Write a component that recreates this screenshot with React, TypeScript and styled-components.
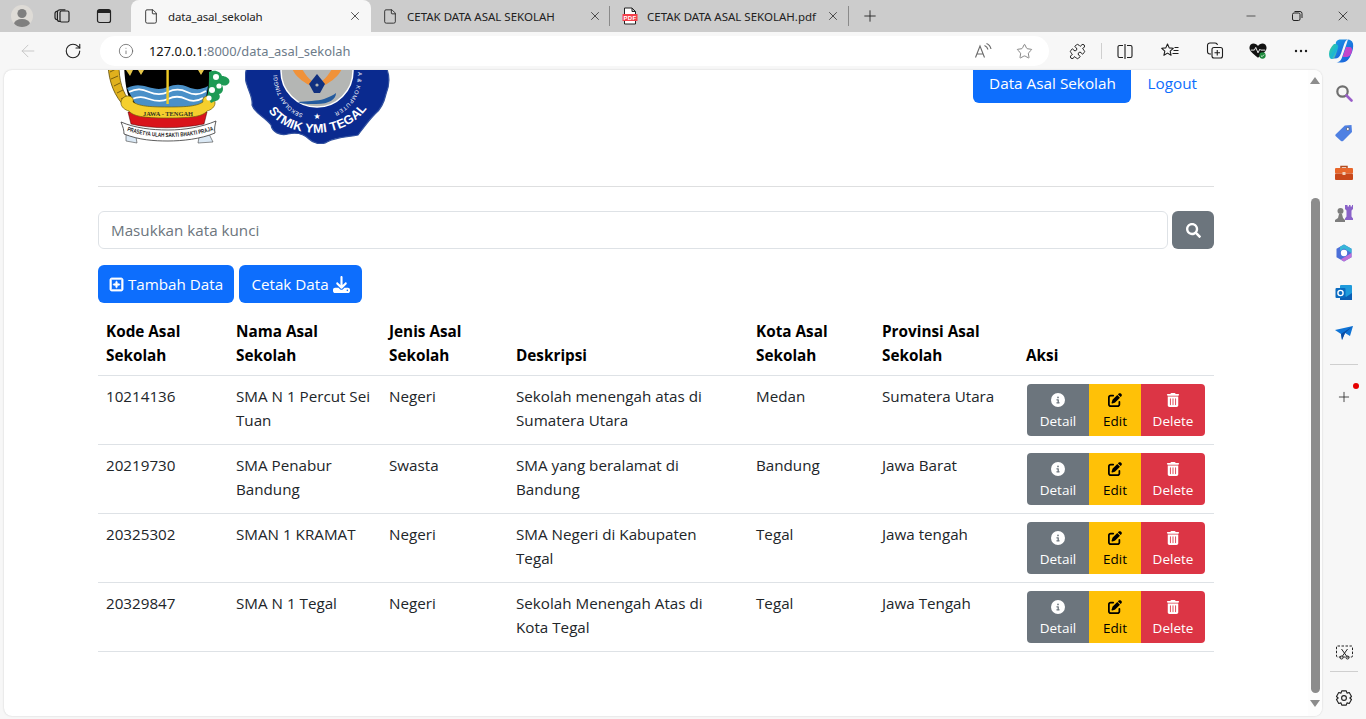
import React from "react";
import styled, { createGlobalStyle } from "styled-components";
import { ArrowLeft, RotateCw, Info, Star, X, Plus, Minus, File, Puzzle } from "lucide-react";
import { FaCircleInfo, FaPenToSquare, FaTrashCan, FaRegSquarePlus, FaDownload } from "react-icons/fa6";
import { FaSearch } from "react-icons/fa";

const Global = createGlobalStyle`
  html, body { margin: 0; padding: 0; height: 719px; overflow: hidden; background: #f7f7f7; }
  * { box-sizing: border-box; }
  #root { height: 719px; }
`;

const Shell = styled.div`
  width: 1366px; height: 719px; display: flex; flex-direction: column; background: #f7f7f7;
  font-family: "Noto Sans", "Open Sans", sans-serif; color: #212529;
`;
const TabStrip = styled.div`
  height: 32px; background: #cccccc; display: flex; align-items: stretch; flex: none;
`;
const StripLeft = styled.div`
  width: 131px; display: flex; align-items: center; padding-left: 11px; flex: none;
`;
const Avatar = styled.div`
  width: 22px; height: 22px; border-radius: 50%; background: #dedbd6; overflow: hidden; flex: none; margin-right: 19px;
  display: flex;
`;
const StripIcon = styled.div<{ $gap?: number }>`
  width: 20px; height: 20px; display: flex; align-items: center; justify-content: center; flex: none;
  margin-right: ${p => p.$gap ?? 0}px;
`;
const Tab = styled.div<{ $active?: boolean; $w: number; $pl: number; $pr: number; $sep?: boolean }>`
  width: ${p => p.$w}px; display: flex; align-items: center; padding: 0 ${p => p.$pr}px 0 ${p => p.$pl}px; flex: none; position: relative;
  background: ${p => (p.$active ? "#f7f7f7" : "transparent")};
  border-radius: 8px 8px 0 0;
  letter-spacing: ${p => (p.$active ? "-0.17px" : "0")};
  &::after {
    content: ${p => (p.$sep ? '""' : "none")};
    position: absolute; right: 0; top: 6px; height: 20px; width: 1px; background: #8a8a8a;
  }
`;
const TabIcon = styled.div`
  width: 16px; height: 18px; margin-right: 9px; display: flex; align-items: center; justify-content: center; flex: none;
`;
const TabTitle = styled.span`
  flex: 1; font-size: 11.5px; color: #222; white-space: nowrap; overflow: hidden;
`;
const TabClose = styled.div`
  width: 16px; height: 16px; display: flex; align-items: center; justify-content: center; flex: none; color: #222;
`;
const NewTab = styled.div`
  width: 20px; height: 32px; margin-left: 11px; display: flex; align-items: center; justify-content: center; color: #222;
`;
const WindowControls = styled.div`
  margin-left: auto; display: flex; align-items: center; color: #222;
`;
const WinBtn = styled.div`
  width: 46px; height: 32px; display: flex; align-items: center; justify-content: center;
`;

const Toolbar = styled.div`
  height: 38px; flex: none; display: flex; align-items: center; background: #f7f7f7; padding-left: 18px;
`;
const NavBtn = styled.div<{ $w: number }>`
  width: ${p => p.$w}px; display: flex; align-items: center; flex: none; color: #222;
`;
const AddressBar = styled.div`
  width: 949px; height: 30px; margin-left: 8px; border-radius: 15px; background: #fff; display: flex; align-items: center; flex: none;
  padding-left: 18px; padding-right: 16px;
`;
const Url = styled.div`
  margin-left: 15px; font-size: 12.9px; color: #111; white-space: nowrap; flex: 1;
  span { color: #6d7b8a; }
`;
const BarIcon = styled.div<{ $gap?: number }>`
  display: flex; align-items: center; justify-content: center; width: 18px; height: 18px; margin-left: ${p => p.$gap ?? 0}px; color: #666;
`;
const ToolGroup = styled.div`
  display: flex; align-items: center; margin-left: 19px; color: #1d1d1d;
`;
const ToolIcon = styled.div<{ $gap?: number }>`
  width: 18px; height: 18px; margin-left: ${p => p.$gap ?? 0}px; display: flex; align-items: center; justify-content: center; position: relative;
`;
const ToolSep = styled.div`
  width: 1px; height: 16px; background: #cfcfcf; margin-left: 15px;
`;

const Body = styled.div`
  flex: 1; min-height: 0; display: flex; align-items: stretch;
`;
const PageFrame = styled.div`
  margin-left: 4px; width: 1318px; height: 646px; background: #fff; border-radius: 8px; display: flex; overflow: hidden; flex: none;
  box-shadow: 0 0 2px rgba(0,0,0,.18);
`;
const Page = styled.main`
  width: 1304px; height: 100%; overflow: hidden; flex: none;
  font-family: "Open Sans", "Noto Sans", sans-serif; font-size: 15.2px; line-height: 24px; color: #212529;
`;
const Container = styled.div`
  width: 1140px; margin: -5px auto 0; padding: 0 12px;
`;
const Header = styled.header`
  height: 121px; display: flex; justify-content: space-between; align-items: flex-start;
`;
const Logos = styled.div`
  display: flex; padding-left: 10px; gap: 13px;
`;
const NavLinks = styled.nav`
  display: flex; align-items: center; gap: 1px;
`;
const ActiveLink = styled.a`
  height: 38px; width: 158px; padding-bottom: 2px; background: #0d6efd; color: #fff; border-radius: 6px; display: flex; align-items: center; justify-content: center;
  white-space: nowrap; font-size: 15.3px;
`;
const NavLink = styled.a`
  color: #0d6efd; padding: 0 17px 2px 15px; font-size: 15.3px;
`;
const Rule = styled.hr`
  margin: 0 0 24px; border: 0; border-top: 1px solid #dedfe0; height: 0;
`;
const SearchRow = styled.form`
  display: flex; gap: 4px; margin-bottom: 16px;
`;
const SearchInput = styled.div`
  flex: 1; height: 38px; border: 1px solid #dee2e6; border-radius: 6px; padding: 6px 12px; color: #6c757d; background: #fff;
`;
const SearchBtn = styled.button`
  width: 42px; height: 38px; border: 0; border-radius: 6px; background: #6c757d; color: #fff; padding: 0; display: flex; align-items: center; justify-content: center;
`;
const ActionRow = styled.div`
  display: flex; gap: 5px; margin-bottom: 8px;
`;
const PrimaryBtn = styled.button<{ $w: number }>`
  width: ${p => p.$w}px; height: 38px; border: 0; border-radius: 6px; background: #0d6efd; color: #fff; padding: 0;
  font: inherit; display: flex; align-items: center; justify-content: center; gap: 4px; white-space: nowrap;
`;
const Table = styled.table`
  width: 1116px; border-collapse: collapse; table-layout: fixed;
`;
const Th = styled.th<{ $w: number }>`
  width: ${p => p.$w}px; padding: 8px; text-align: left; vertical-align: bottom; font-weight: 700; color: #000; font-size: 15.3px;
  border-bottom: 1px solid #dee2e6;
`;
const Td = styled.td<{ $pr: number }>`
  padding: 8px ${p => p.$pr}px 8px 8px; vertical-align: top; border-bottom: 1px solid #dee2e6; color: #212529;
`;
const ActionCell = styled.td`
  padding: 8px; vertical-align: top; border-bottom: 1px solid #dee2e6;
`;
const BtnGroup = styled.div`
  display: flex; margin-left: 1px; height: 52px;
`;
const RowBtn = styled.button<{ $bg: string; $fg: string; $w: number }>`
  width: ${p => p.$w}px; height: 52px; border: 0; padding: 2px 0 0; background: ${p => p.$bg}; color: ${p => p.$fg};
  font: inherit; font-size: 13.5px; line-height: 21px; display: flex; flex-direction: column; align-items: center; justify-content: center;
  &:first-child { border-radius: 4px 0 0 4px; }
  &:last-child { border-radius: 0 4px 4px 0; }
  svg { display: block; margin: 3px 0 4px; }
`;

const ScrollTrack = styled.div`
  width: 14px; flex: none; background: #fdfdfd; display: flex; flex-direction: column; align-items: center; padding-top: 7px;
`;
const ArrowUp = styled.div`
  width: 0; height: 0; border-left: 5px solid transparent; border-right: 5px solid transparent; border-bottom: 7px solid #8c8c8c;
`;
const ArrowDown = styled.div`
  width: 0; height: 0; border-left: 5px solid transparent; border-right: 5px solid transparent; border-top: 7px solid #8c8c8c; margin-top: 7px;
`;
const Thumb = styled.div`
  width: 9px; height: 495px; background: #8c8c8c; border-radius: 5px; margin-top: 114px;
`;
const SideBar = styled.aside`
  flex: 1; display: flex; flex-direction: column; align-items: center; height: 649px; padding-top: 13px;
`;
const SideIcon = styled.div<{ $mb?: number }>`
  width: 20px; height: 20px; flex: none; margin-bottom: ${p => p.$mb ?? 20}px; display: flex; align-items: center; justify-content: center; position: relative; color: #222;
`;
const SideSep = styled.div<{ $mb: number }>`
  width: 28px; height: 1px; background: #cfcfcf; flex: none; margin-bottom: ${p => p.$mb}px;
`;
const RedDot = styled.span`
  position: absolute; top: -4px; right: -5px; width: 6px; height: 6px; border-radius: 50%; background: #e60000;
`;
const Spacer = styled.div`
  flex: 1;
`;

const s = { fill: "none", stroke: "currentColor", strokeWidth: 1.2, strokeLinecap: "round" as const, strokeLinejoin: "round" as const };

const PdfIcon = () => (
  <svg width="16" height="18" viewBox="0 0 16 18">
    <path d="M2.5 7V1h7.5l3.5 3.5V7M2.5 14v3h11v-3M10 1v3.5h3.5" fill="#fff" stroke="#222" strokeWidth="1" />
    <rect x="0.5" y="7" width="15" height="7" fill="#f4404a" />
    <text x="8" y="12.6" textAnchor="middle" fontSize="6" fontWeight="700" fontFamily="Liberation Sans" fill="#fff" letterSpacing=".4">PDF</text>
  </svg>
);

const Crest = () => (
  <svg width="124" height="79" viewBox="108 65 124 79">
    <path d="M108 65 C109 82 114 96 126 108 L131 103 C122 92 119 80 119 65Z" fill="#e0b11d" stroke="#5d4a07" strokeWidth=".8" />
    <path d="M110 72l6-3M111 79l7-3M114 86l6-3M117 93l6-3M121 99l6-3" stroke="#7a6010" strokeWidth="1" />
    <path d="M124 65 H212 C211 85 209 96 203 106 H133 C127 96 125 85 124 65Z" fill="#000" />
    <path d="M126 70l4 6 3-6zM138 70l3 5 3-5zM198 70l3 5 3-5z" fill="#e5c64a" />
    <path d="M127 88c8-4 14-3 21-1s13 3 20 0 13-3 20 0 13 3 20-1l-2 12c-4 8-10 12-38 12s-32-4-36-12z" fill="#4a90c8" />
    <path d="M129 92c8-4 13-3 20 0s13 3 19 0 13-3 19 0 13 3 19-1M132 99c7-3 11-2 17 0s13 3 19 0 12-3 18 0 12 2 17-1" stroke="#fff" strokeWidth="1.8" fill="none" />
    <rect x="166.4" y="65" width="2.4" height="39" fill="#f0cb25" />
    <path d="M128 112h79l-3 12c-24 5-52 5-73 0z" fill="#d9131a" stroke="#400" strokeWidth=".5" />
    <path d="M121 103c0-4 3-7 7-7 4 0 6 3 5 6 6 4 15 5 35 5s29-1 35-5c-1-3 1-6 5-6 4 0 7 3 7 7s-4 7-8 8c-4 5-13 7-39 7s-35-2-39-7c-4-1-8-4-8-8z" fill="#f5cf2d" stroke="#6d5b0b" strokeWidth=".7" />
    <text x="168" y="115.500" textAnchor="middle" fontSize="6.4" fontWeight="700" fontFamily="Liberation Serif" fill="#332">JAWA - TENGAH</text>
    <path d="M126 134l10 3 1 6-11-2zM209 134l-10 3-1 6 15-1z" fill="#dbe9f5" stroke="#444" strokeWidth=".6" />
    <path d="M121 122c2 5 3 8 3 12 15 6 30 7 44 7s33-2 47-8c-1-4 0-8 1-12-14 6-31 9-48 9s-33-2-47-8z" fill="#fff" stroke="#333" strokeWidth=".8" />
    <path id="crestText" d="M125 130c14 5 28 7 43 7s31-2 46-7" fill="none" />
    <text fontSize="6" fontWeight="700" fontFamily="Liberation Sans" fill="#222"><textPath href="#crestText" startOffset="2" textLength="88" lengthAdjust="spacingAndGlyphs">PRASETYA ULAH SAKTI BHAKTI PRAJA</textPath></text>
    <path d="M209 72c6-3 12 0 13 4 4 0 9 3 7 7-2 3-5 3-7 2 2 4 1 8-3 9 2 3 0 7-4 7l-4 2-4-7c2-5 2-14 2-24z" fill="#1e9a55" />
    <circle cx="216" cy="77" r="3" fill="#fff" /><circle cx="212" cy="90" r="3" fill="#fff" /><circle cx="219" cy="86" r="2.6" fill="#fff" /><circle cx="209" cy="98" r="2.6" fill="#fff" />
  </svg>
);

const Badge = () => (
  <svg width="146" height="79" viewBox="245 65 146 79">
    <defs>
      <path id="mainArc" d="M267 108 C285 142 350 142 371 102" fill="none" />
      <path id="leftArc" d="M303 114 C287 109 277 92 277 72" fill="none" />
      <path id="rightArc" d="M358 72 C358 92 350 108 328 115" fill="none" />
    </defs>
    <path d="M248 65 C244 74 245 80 247 85 C249 92 253 98 252 105 C255 114 264 116 271 125 C272 132 280 136 288 134 C296 132 304 134 309 139 C314 144 322 145 327 142 C336 137 348 137 358 135 C364 127 369 120 375 114 C380 110 384 103 386 94 C390 84 390 74 385 65Z" fill="#0a2a8f" stroke="#32519f" strokeWidth="1.2" />
    <circle cx="317" cy="71" r="36" fill="#b4b6b4" stroke="#fff" strokeWidth="1.5" />
    <path d="M300 65l-9 0c2 9 9 15 18 20l3-4c-5-4-8-8-12-16zM334 65l9 0c-2 9-9 15-18 20l-3-4c5-4 8-8 12-16z" fill="#f0923a" />
    <path d="M317 74l8 10-5 9h-6l-5-9z" fill="#10307f" />
    <circle cx="317" cy="85" r="1.6" fill="#b4b6b4" />
    <path d="M298 102c8-1 20-1 26-3 5-2 10-4 12-6 0 6-6 11-20 11-8 0-14 0-18-2z" fill="#235a9e" />
    <text fontSize="12.5" fontWeight="700" fontFamily="Liberation Sans" fill="#fff"><textPath href="#mainArc" startOffset="3" textLength="113">STMIK YMI TEGAL</textPath></text>
    <text fontSize="5.6" fontFamily="Liberation Sans" fill="#fff"><textPath href="#leftArc" textLength="50">SEKOLAH TINGGI</textPath></text>
    <text fontSize="5.6" fontFamily="Liberation Sans" fill="#fff"><textPath href="#rightArc" textLength="50">A &amp; KOMPUTER</textPath></text>
    <text x="317" y="119" textAnchor="middle" fontSize="8" fill="#fff" fontFamily="DejaVu Sans">★</text>
  </svg>
);

const rows = [
  ["10214136", "SMA N 1 Percut Sei Tuan", "Negeri", "Sekolah menengah atas di Sumatera Utara", "Medan", "Sumatera Utara"],
  ["20219730", "SMA Penabur Bandung", "Swasta", "SMA yang beralamat di Bandung", "Bandung", "Jawa Barat"],
  ["20325302", "SMAN 1 KRAMAT", "Negeri", "SMA Negeri di Kabupaten Tegal", "Tegal", "Jawa tengah"],
  ["20329847", "SMA N 1 Tegal", "Negeri", "Sekolah Menengah Atas di Kota Tegal", "Tegal", "Jawa Tengah"],
];
const cols: [string, number][] = [
  ["Kode Asal Sekolah", 130], ["Nama Asal Sekolah", 153], ["Jenis Asal Sekolah", 127], ["Deskripsi", 240],
  ["Kota Asal Sekolah", 126], ["Provinsi Asal Sekolah", 144], ["Aksi", 196],
];

export default function App() {
  return (
    <Shell>
      <Global />
      <TabStrip>
        <StripLeft>
          <Avatar>
            <svg width="22" height="22" viewBox="0 0 22 22"><circle cx="11" cy="8.5" r="4.600" fill="#7f7f7f" /><ellipse cx="11" cy="19" rx="8" ry="5" fill="#7f7f7f" /></svg>
          </Avatar>
          <StripIcon $gap={22}>
            <svg width="18" height="18" viewBox="0 0 18 18" {...s} color="#222"><rect x="7" y="4" width="9" height="11" rx="1.500" /><path d="M7 14.500c-2 0-2.600-.8-2.600-2V5.500C4.400 3.500 5.500 2.800 7 2.800h5M4.400 13c-1.500-.3-2.400-1-2.400-2.400V6.500C2 5 3 4.300 4.400 4" /></svg>
          </StripIcon>
          <StripIcon>
            <svg width="16" height="16" viewBox="0 0 16 16" {...s} color="#222"><rect x="1.500" y="1.500" width="13" height="13" rx="2" /><path d="M2 2h12v3H2z" fill="#222" stroke="none" /></svg>
          </StripIcon>
        </StripLeft>
        <Tab $active $w={240} $pl={12} $pr={8}>
          <TabIcon><File size={17} strokeWidth={1.3} color="#222" /></TabIcon>
          <TabTitle>data_asal_sekolah</TabTitle>
          <TabClose><X size={14} strokeWidth={1.3} /></TabClose>
        </Tab>
        <Tab $w={239} $pl={11} $pr={7} $sep>
          <TabIcon><File size={17} strokeWidth={1.3} color="#222" /></TabIcon>
          <TabTitle>CETAK DATA ASAL SEKOLAH</TabTitle>
          <TabClose><X size={14} strokeWidth={1.3} /></TabClose>
        </Tab>
        <Tab $w={239} $pl={12} $pr={8} $sep>
          <TabIcon><PdfIcon /></TabIcon>
          <TabTitle>CETAK DATA ASAL SEKOLAH.pdf</TabTitle>
          <TabClose><X size={14} strokeWidth={1.3} /></TabClose>
        </Tab>
        <NewTab><Plus size={18} strokeWidth={1.2} /></NewTab>
        <WindowControls>
          <WinBtn><Minus size={14} strokeWidth={1.2} /></WinBtn>
          <WinBtn>
            <svg width="12" height="12" viewBox="0 0 12 12" fill="none" stroke="#222"><rect x="1.500" y="3" width="7.500" height="7.500" rx="1.500" /><path d="M3.500 1.500h5.500a2 2 0 0 1 2 2V8" /></svg>
          </WinBtn>
          <WinBtn><X size={16} strokeWidth={1.2} /></WinBtn>
        </WindowControls>
      </TabStrip>
      <Toolbar>
        <NavBtn $w={46}><ArrowLeft size={20} strokeWidth={1.1} color="#c4c4c4" /></NavBtn>
        <NavBtn $w={28}><RotateCw size={18} strokeWidth={1.5} /></NavBtn>
        <AddressBar>
          <Info size={16} strokeWidth={1.2} color="#666" />
          <Url>127.0.0.1<span>:8000/data_asal_sekolah</span></Url>
          <BarIcon>
            <svg width="18" height="18" viewBox="0 0 18 18" fill="none" stroke="#6a6a6a" strokeWidth="1.100"><path d="M1.500 15.500L6 4l4.500 11.500M3 12h6" /><path d="M10.500 3.500c2 .8 3 2 3.500 4M12.500 1.500c2.500 1 4 3 4.500 5.500" /></svg>
          </BarIcon>
          <BarIcon $gap={23}><Star size={17} strokeWidth={1.1} /></BarIcon>
        </AddressBar>
        <ToolGroup>
          <ToolIcon><Puzzle size={17} strokeWidth={1.3} color="#111" /></ToolIcon>
          <ToolSep />
          <ToolIcon $gap={14}>
            <svg width="16" height="15" viewBox="0 0 16 15" fill="none" stroke="#1d1d1d" strokeWidth="1.100"><path d="M6 1.500H2.500a1.500 1.500 0 0 0-1.500 1.500v9a1.500 1.500 0 0 0 1.500 1.500H6M10 1.500h3.500a1.500 1.500 0 0 1 1.500 1.500v9a1.500 1.500 0 0 1-1.500 1.500H10M8 0v15" /></svg>
          </ToolIcon>
          <ToolIcon $gap={27}>
            <svg width="18" height="18" viewBox="0 0 18 18" fill="none" stroke="#1d1d1d" strokeWidth="1.100" strokeLinejoin="round"><path d="M6.500 2l1.700 3.900 4.100.4-3.100 2.800.9 4.200-3.600-2.200L2.900 13.300l.9-4.200L.7 6.300l4.100-.4z" /><path d="M12.500 8.500h5M11.500 11.500h6M13.500 5.500h4" /></svg>
          </ToolIcon>
          <ToolIcon $gap={27}>
            <svg width="18" height="18" viewBox="0 0 18 18" fill="none" stroke="#1d1d1d" strokeWidth="1.100"><path d="M5 12H4a2.500 2.500 0 0 1-2.500-2.500V3.500A2.500 2.500 0 0 1 4 1h5a2.500 2.500 0 0 1 2.500 2" /><rect x="6" y="5.500" width="10.500" height="10.500" rx="2" /><path d="M11.250 8v5.500M8.500 10.750H14" /></svg>
          </ToolIcon>
          <ToolIcon $gap={25}>
            <svg width="20" height="18" viewBox="0 0 20 18"><path d="M10 16.500C4 12 .5 9 .5 5.500 .5 2.500 2.800 .8 5 .8 7 .8 9 1.800 10 3.500 11 1.800 13 .8 15 .8c2.200 0 4.500 1.700 4.500 4.700 0 3.500-3.500 6.500-9.500 11z" fill="#111" /><path d="M2 8h4l1.500-3 2.500 6 2-4 1 1h5" fill="none" stroke="#fff" strokeWidth="1" /><circle cx="15" cy="14" r="3.500" fill="#1e8a3c" /><path d="M13.200 14l1.300 1.300 2.200-2.300" stroke="#fff" fill="none" strokeWidth=".9" /></svg>
          </ToolIcon>
          <ToolIcon $gap={25}>
            <svg width="14" height="4" viewBox="0 0 14 4" fill="#1d1d1d"><circle cx="2" cy="2" r="1.200" /><circle cx="7" cy="2" r="1.200" /><circle cx="12" cy="2" r="1.200" /></svg>
          </ToolIcon>
          <ToolIcon $gap={22}>
            <svg width="26" height="24" viewBox="0 0 26 24" style={{ flex: "none" }}>
              <defs>
                <linearGradient id="cpA" x1="0" y1="0" x2="1" y2="1"><stop offset="0" stopColor="#1ba7e8" /><stop offset="1" stopColor="#1a52d8" /></linearGradient>
                <linearGradient id="cpB" x1="0" y1="0" x2="1" y2="1"><stop offset="0" stopColor="#3fd08a" /><stop offset=".6" stopColor="#18b5d8" /><stop offset="1" stopColor="#d8d24a" /></linearGradient>
              </defs>
              <path d="M8 3c1-2 3-2.500 5-2.500h7c-2 .5-3 2-4 5l-3 9c-1 3-3 5-6 5H3c2-1 3-3 3-5z" fill="url(#cpA)" />
              <path d="M6 5C3 8 1 11 1 15c0 3 1 5 3 5 2 0 3-2 4-5l2-6c.5-2 0-4-4-4z" fill="url(#cpB)" />
              <path d="M20 .5c2 0 4 1 5 4 .5 3 0 7-2 11-1.500 4-4 8-9 8H7c4 0 6-2 7-5l5-15c.3-1.500 1-3 1-3z" fill="url(#cpA)" />
              <path d="M18 8h4c2 0 2.500 3 1.500 6-1 2.500-3 4-5 4h-4z" fill="#e040c8" opacity=".85" />
            </svg>
          </ToolIcon>
        </ToolGroup>
      </Toolbar>
      <Body>
        <PageFrame>
          <Page>
            <Container>
              <Header>
                <Logos><Crest /><Badge /></Logos>
                <NavLinks>
                  <ActiveLink>Data Asal Sekolah</ActiveLink>
                  <NavLink>Logout</NavLink>
                </NavLinks>
              </Header>
              <Rule />
              <SearchRow>
                <SearchInput>Masukkan kata kunci</SearchInput>
                <SearchBtn><FaSearch size={15} /></SearchBtn>
              </SearchRow>
              <ActionRow>
                <PrimaryBtn $w={136}><FaRegSquarePlus size={15} stroke="currentColor" strokeWidth={25} />Tambah Data</PrimaryBtn>
                <PrimaryBtn $w={123}>Cetak Data<FaDownload size={17} /></PrimaryBtn>
              </ActionRow>
              <Table>
                <thead>
                  <tr>{cols.map(([t, w]) => <Th key={t} $w={w}>{t}</Th>)}</tr>
                </thead>
                <tbody>
                  {rows.map(r => (
                    <tr key={r[0]}>
                      {r.map((c, i) => <Td key={i} $pr={i === 3 ? 30 : 8}>{c}</Td>)}
                      <ActionCell>
                        <BtnGroup>
                          <RowBtn $bg="#6c757d" $fg="#fff" $w={62}><FaCircleInfo size={14} />Detail</RowBtn>
                          <RowBtn $bg="#ffc107" $fg="#000" $w={52}><FaPenToSquare size={14} />Edit</RowBtn>
                          <RowBtn $bg="#dc3545" $fg="#fff" $w={64}><FaTrashCan size={14} />Delete</RowBtn>
                        </BtnGroup>
                      </ActionCell>
                    </tr>
                  ))}
                </tbody>
              </Table>
            </Container>
          </Page>
          <ScrollTrack>
            <ArrowUp />
            <Thumb />
            <ArrowDown />
          </ScrollTrack>
        </PageFrame>
        <SideBar>
          <SideIcon>
            <svg width="18" height="18" viewBox="0 0 18 18" fill="none"><circle cx="7.500" cy="7.500" r="5.200" stroke="#6f6f6f" strokeWidth="2.200" /><path d="M11.500 11.500l5 5" stroke="#9a5fc9" strokeWidth="2.600" strokeLinecap="round" /></svg>
          </SideIcon>
          <SideIcon>
            <svg width="18" height="18" viewBox="0 0 18 18"><path d="M.8 10.300L9.800 1.500 16.500 1l.5 7-9 8.900a1.500 1.500 0 0 1-2 0L.8 12.300a1.400 1.400 0 0 1 0-2z" fill="#4f80e2" /><circle cx="12.800" cy="5" r="1.500" fill="#fff" stroke="#334" strokeWidth=".5" /></svg>
          </SideIcon>
          <SideIcon>
            <svg width="18" height="16" viewBox="0 0 18 16"><path d="M6 3V1.500h6V3" fill="none" stroke="#b34a1d" strokeWidth="1.500" /><rect y="3" width="18" height="5.500" rx="1" fill="#e8662a" /><rect y="8.500" width="18" height="6.500" rx="1" fill="#c9481a" /><rect x="7.500" y="7" width="3" height="3" fill="#f2d0b8" /></svg>
          </SideIcon>
          <SideIcon>
            <svg width="20" height="20" viewBox="0 0 20 20"><path d="M12 2h1.500v1.500H15V2h1.500v1.500H18V2h1v4l-1.500 1.500v6l1.500 2v1.500h-8V15.500l1.500-2v-6L11 6V2z" fill="#8a62c9" /><circle cx="6.500" cy="8" r="3" fill="#7d7d7d" /><path d="M5 11h3l1 4 2 2v2H1v-2l3-2z" fill="#7d7d7d" /></svg>
          </SideIcon>
          <SideIcon>
            <svg width="18" height="18" viewBox="0 0 18 18"><path d="M9 .5l7.500 4.300v8.400L9 17.500 1.500 13.200V4.800z" fill="#4b6fd8" /><path d="M9 .5l7.500 4.300V9L9 4.500 5 7V2.800z" fill="#38b6d8" /><path d="M16.500 9v4.200L9 17.500l-3.500-2 6-3.500z" fill="#c070d8" /><circle cx="9" cy="9" r="3.200" fill="#fff" /></svg>
          </SideIcon>
          <SideIcon>
            <svg width="18" height="18" viewBox="0 0 18 18"><rect x="5" y="1" width="12" height="15" rx="1" fill="#1f9bdc" /><path d="M5 9l6 4 6-4v7H5z" fill="#0b5fb5" /><rect x="0.500" y="4" width="10" height="10" rx="1" fill="#0a6bc0" /><circle cx="5.500" cy="9" r="2.600" fill="none" stroke="#fff" strokeWidth="1.400" /></svg>
          </SideIcon>
          <SideIcon $mb={21}>
            <svg width="18" height="16" viewBox="0 0 18 16"><path d="M0 5l18-4-3 10-5-3-3 7-1-6z" fill="#0f74d6" /><path d="M6 9L18 1l-8 7-3 7z" fill="#0b4aa0" /></svg>
          </SideIcon>
          <SideSep $mb={22} />
          <SideIcon>
            <Plus size={16} strokeWidth={1.200} />
            <RedDot />
          </SideIcon>
          <Spacer />
          <SideIcon $mb={9}>
            <svg width="17" height="15" viewBox="0 0 17 15" fill="none" stroke="#222" strokeWidth="1"><rect x=".5" y="1" width="16" height="11" rx="1" strokeDasharray="2.500 1.500" /><path d="M5.500 4l5 7M11.500 4l-5 7" /><circle cx="5.500" cy="12.500" r="1.500" /><circle cx="11.500" cy="12.500" r="1.500" /></svg>
          </SideIcon>
          <SideSep $mb={16} />
          <SideIcon $mb={11}>
            <svg width="18" height="18" viewBox="0 0 24 24" fill="none" stroke="#222" strokeWidth="1.500" strokeLinejoin="round"><path d="M9 2.500h6l1 3 3-.8 3 5.300-2.200 2 2.200 2-3 5.300-3-.8-1 3H9l-1-3-3 .8L2 14l2.200-2L2 10l3-5.300 3 .8z" /><circle cx="12" cy="12" r="3.200" /></svg>
          </SideIcon>
        </SideBar>
      </Body>
    </Shell>
  );
}
